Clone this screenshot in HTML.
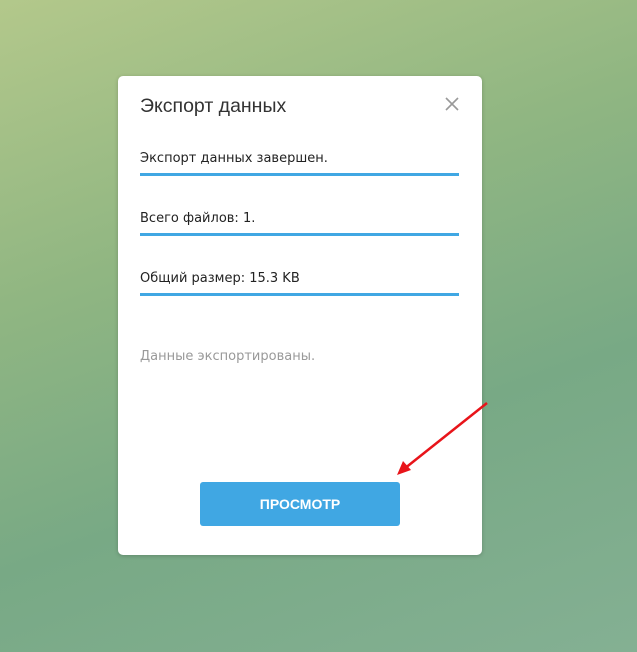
<!DOCTYPE html>
<html><head><meta charset="utf-8"><style>
html,body{margin:0;padding:0;width:637px;height:652px;overflow:hidden}
body{background:linear-gradient(160deg,#b3c88b 0%,#90b682 35%,#78a985 65%,#84b093 100%);font-family:"Liberation Sans","DejaVu Sans",sans-serif;position:relative}
.dlg{position:absolute;left:118px;top:76px;width:364px;height:479px;background:#fff;border-radius:5px;box-shadow:0 1px 4px rgba(0,0,0,.2)}
.t{position:absolute;left:22px;top:19px;font-size:19.5px;color:#333}
.x{position:absolute;left:327px;top:21px;width:14px;height:14px}
.f{position:absolute;left:22px;width:319px;font-family:"DejaVu Sans",sans-serif;font-size:13px;color:#222;border-bottom:3px solid #40a7e3;padding-bottom:7px}
.n{position:absolute;left:22px;top:273px;font-family:"DejaVu Sans",sans-serif;font-size:13px;color:#999}
.b{position:absolute;left:82px;top:406px;width:200px;height:44px;background:#40a7e3;border-radius:3px;color:#fff;font-size:14px;font-weight:bold;text-align:center;line-height:44px}
</style></head><body>
<div class="dlg">
<div class="t">Экспорт данных</div>
<svg class="x" viewBox="0 0 14 14"><path d="M1 1L13 13M13 1L1 13" stroke="#999" stroke-width="1.6"/></svg>
<div class="f" style="top:75px">Экспорт данных завершен.</div>
<div class="f" style="top:135px">Всего файлов: 1.</div>
<div class="f" style="top:195px">Общий размер: 15.3 KB</div>
<div class="n">Данные экспортированы.</div>
<div class="b">ПРОСМОТР</div>
</div>
<svg style="position:absolute;left:0;top:0" width="637" height="652"><line x1="487" y1="403" x2="404" y2="469" stroke="#e8141a" stroke-width="2.5"/><path d="M397 475L403 461L411 470Z" fill="#e8141a"/></svg>
</body></html>
